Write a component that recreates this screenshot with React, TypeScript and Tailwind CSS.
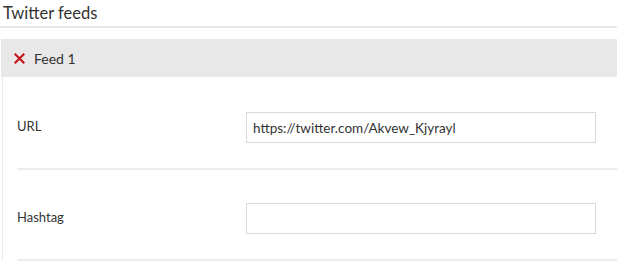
import React from 'react';

const fields = [
  { label: 'URL', value: 'https://twitter.com/Akvew_Kjyrayl' },
  { label: 'Hashtag', value: '' },
];

export default function App() {
  return (
    <div className="w-[617px] h-[267px] overflow-hidden bg-white text-[#333] font-['Lato','Noto_Sans',sans-serif]">
      {/* Section title */}
      <div className="h-[28px] border-b-2 border-[#e8e8e8] pl-[3px] pt-[1px] text-[16.5px] leading-[24px]">
        Twitter feeds
      </div>

      <div className="mt-[11px]">
        {/* Feed header */}
        <div className="ml-[1px] h-[38px] bg-[#e8e8e8] flex items-center pl-[13px] gap-[9px]">
          <svg width="11" height="11" viewBox="0 0 11 11" className="mt-[1px]">
            <path d="M1.5 1.5 L9.5 9.5 M9.5 1.5 L1.5 9.5" stroke="#c4161c" strokeWidth="2.2" strokeLinecap="square" />
          </svg>
          <span className="text-[14px]">Feed 1</span>
        </div>

        {/* Feed body */}
        <div className="ml-[2px] border-l border-[#e8e8e8]">
          {fields.map((f, i) => (
            <div
              key={f.label}
              className={`ml-[14px] border-b-2 border-[#ececec] flex items-center ${i === 0 ? 'pt-[35px] pb-[25px]' : 'pt-[33px] pb-[25px]'}`}
            >
              <label className="w-[229px] text-[13px] -mt-[1px]">{f.label}</label>
              <input
                type="text"
                defaultValue={f.value}
                className="w-[350px] h-[31px] border border-[#d9d9d9] bg-white px-[6px] text-[13.5px] text-[#333] outline-none font-['Lato','Noto_Sans',sans-serif]"
              />
            </div>
          ))}
        </div>
      </div>
    </div>
  );
}
